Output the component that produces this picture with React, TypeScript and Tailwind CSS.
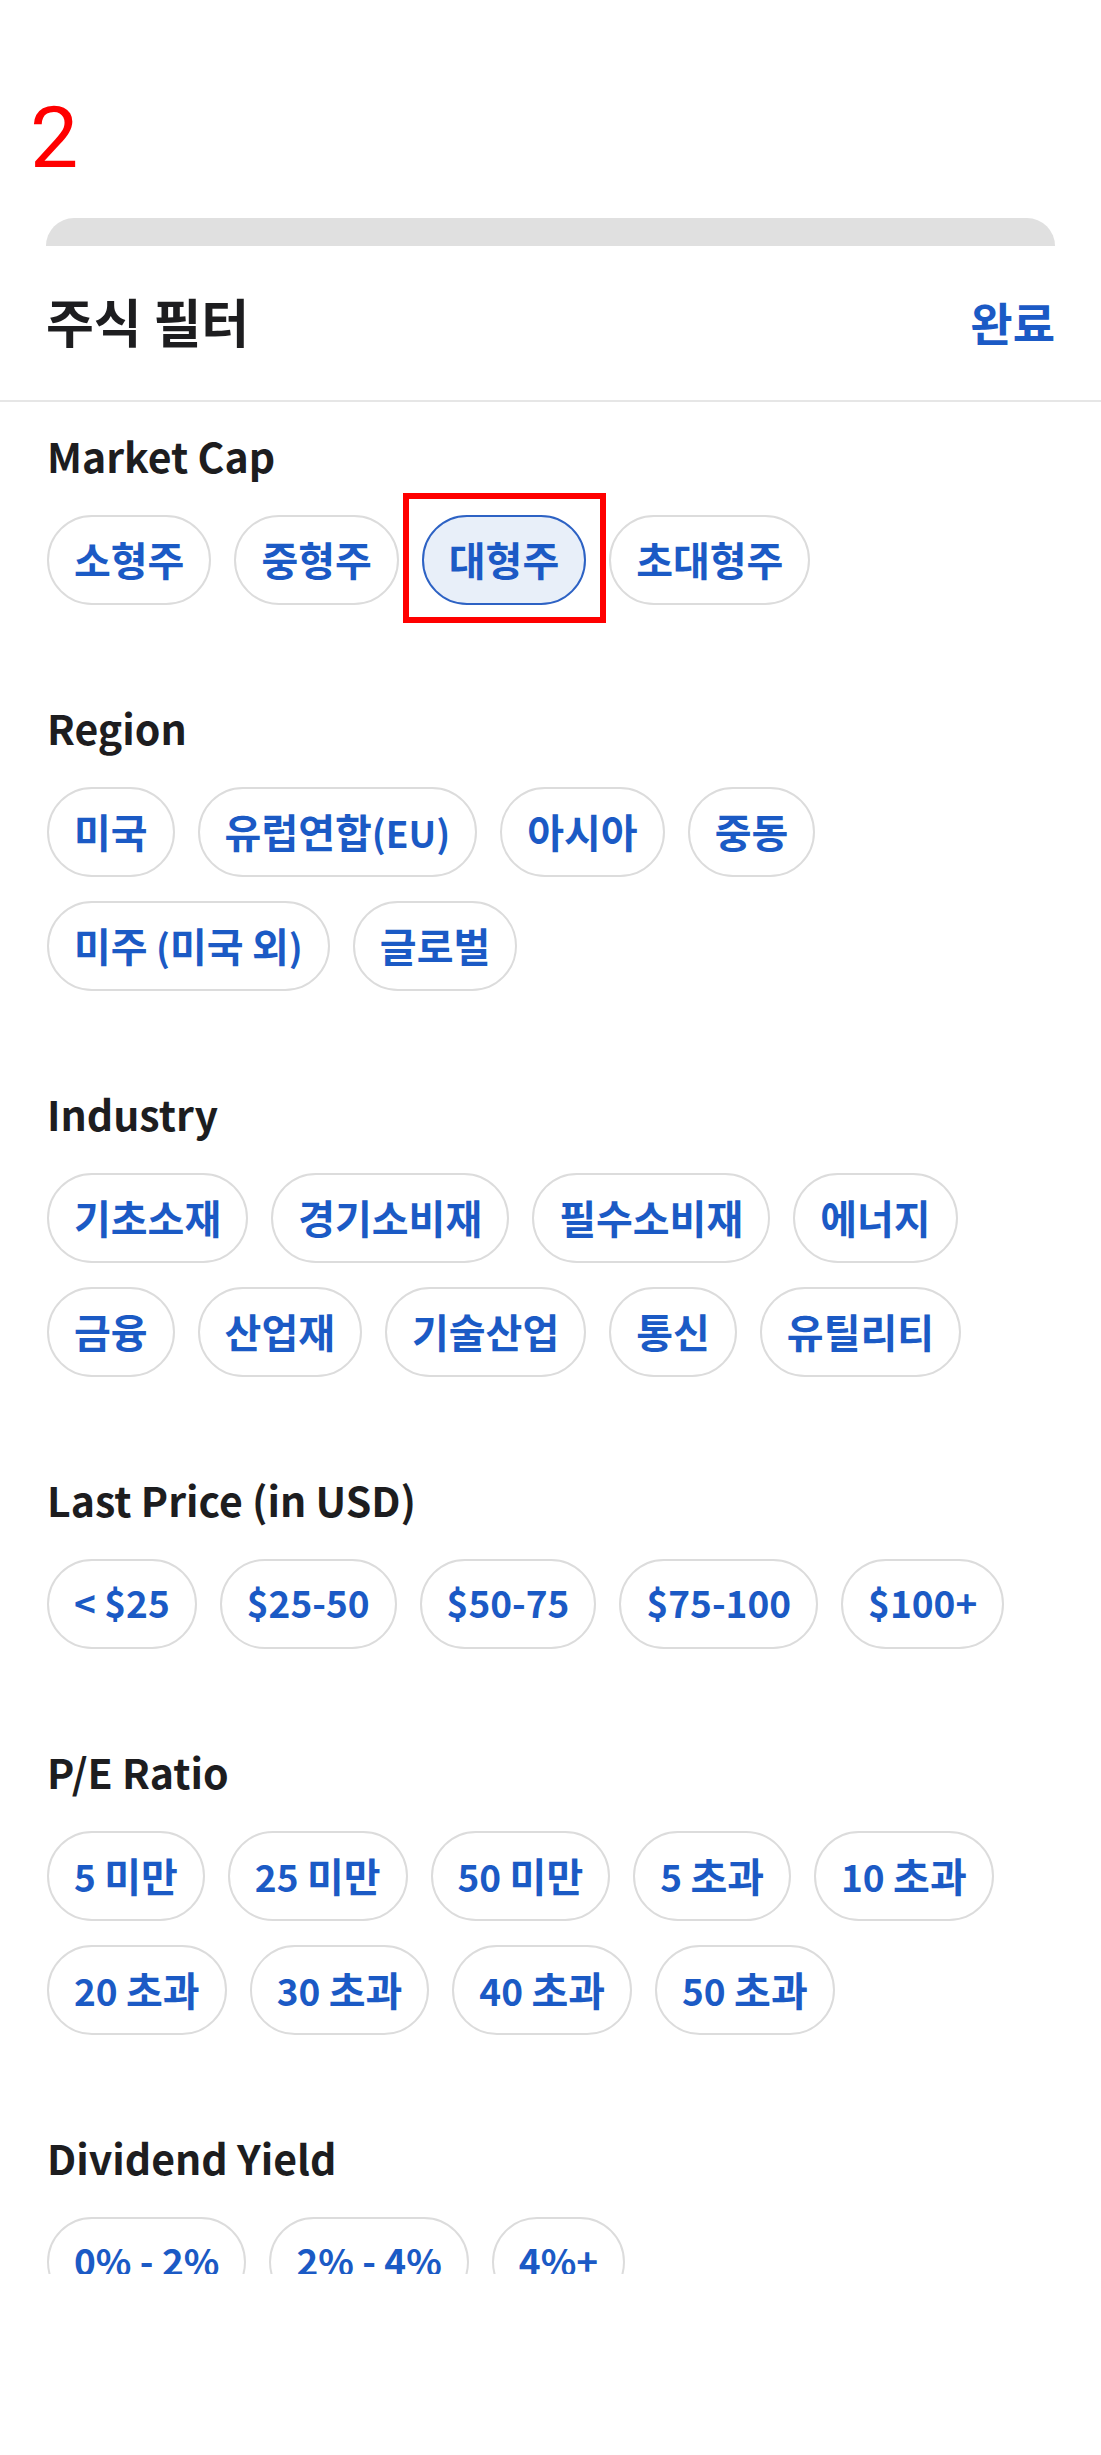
import React from 'react';

type Section = {
  title: string;
  options: string[];
};

const SECTIONS: Section[] = [
  { title: 'Market Cap', options: ['소형주', '중형주', '대형주', '초대형주'] },
  { title: 'Region', options: ['미국', '유럽연합(EU)', '아시아', '중동', '미주 (미국 외)', '글로벌'] },
  {
    title: 'Industry',
    options: ['기초소재', '경기소비재', '필수소비재', '에너지', '금융', '산업재', '기술산업', '통신', '유틸리티'],
  },
  { title: 'Last Price (in USD)', options: ['< $25', '$25-50', '$50-75', '$75-100', '$100+'] },
  {
    title: 'P/E Ratio',
    options: ['5 미만', '25 미만', '50 미만', '5 초과', '10 초과', '20 초과', '30 초과', '40 초과', '50 초과'],
  },
  { title: 'Dividend Yield', options: ['0% - 2%', '2% - 4%', '4%+'] },
];

const FONT = { fontFamily: '"Noto Sans CJK KR", "Noto Sans", sans-serif' };

// hangul runs and latin runs get different sizes so both keep the reference widths
function ChipLabel({ text }: { text: string }) {
  const parts = text.split(/([가-힣]+)/).filter(Boolean);
  return (
    <span className="whitespace-pre leading-none">
      {parts.map((p, i) =>
        /[가-힣]/.test(p) ? (
          <span key={i} className="text-[40px]">
            {p}
          </span>
        ) : (
          <span key={i} className="text-[37px]">
            {p}
          </span>
        ),
      )}
    </span>
  );
}

function Chip({ label, selected }: { label: string; selected?: boolean }) {
  return (
    <div className="relative">
      <button
        className={`flex h-[90px] items-center rounded-full border-2 px-[25px] pb-[3px] font-semibold text-[#1b5ac5] ${
          selected ? 'border-[#2d62c4] bg-[#e8eff9]' : 'border-[#dcdcdc] bg-white'
        }`}
      >
        <ChipLabel text={label} />
      </button>
      {selected && (
        <div className="pointer-events-none absolute -top-[22px] -right-[20px] -bottom-[18px] -left-[19px] border-[6px] border-[#ff0000]" />
      )}
    </div>
  );
}

export default function App() {
  return (
    <div className="min-h-screen w-[1101px] bg-white" style={FONT}>
      <div className="h-[218px] pt-[95px] pl-[30px]">
        <span
          className="block text-[86px] leading-none text-[#ff0000]"
          style={{ fontFamily: 'Roboto, sans-serif' }}
        >
          2
        </span>
      </div>

      <div className="mx-[46px] h-[28px] rounded-t-[28px] bg-[#e0e0e0]" />

      <header className="flex h-[154px] items-center justify-between px-[46px] pb-[4px]">
        <h1 className="text-[52px] leading-none font-semibold text-[#1d1d1f]">주식 필터</h1>
        <button className="text-[46px] leading-none font-semibold text-[#1b5ac5]">완료</button>
      </header>

      <div className="h-[2px] bg-[#e6e6e6]" />

      <div className="h-[1872px] overflow-hidden px-[47px] pt-[28px]">
        <div className="flex flex-col gap-[97px]">
          {SECTIONS.map((s) => (
            <section key={s.title}>
              <h2 className="text-[41px] leading-[51px] font-semibold text-[#1d1d1f]">{s.title}</h2>
              <div className="mt-[34px] flex flex-wrap gap-x-[23px] gap-y-[24px]">
                {s.options.map((o) => (
                  <Chip key={o} label={o} selected={o === '대형주'} />
                ))}
              </div>
            </section>
          ))}
        </div>
      </div>
    </div>
  );
}
